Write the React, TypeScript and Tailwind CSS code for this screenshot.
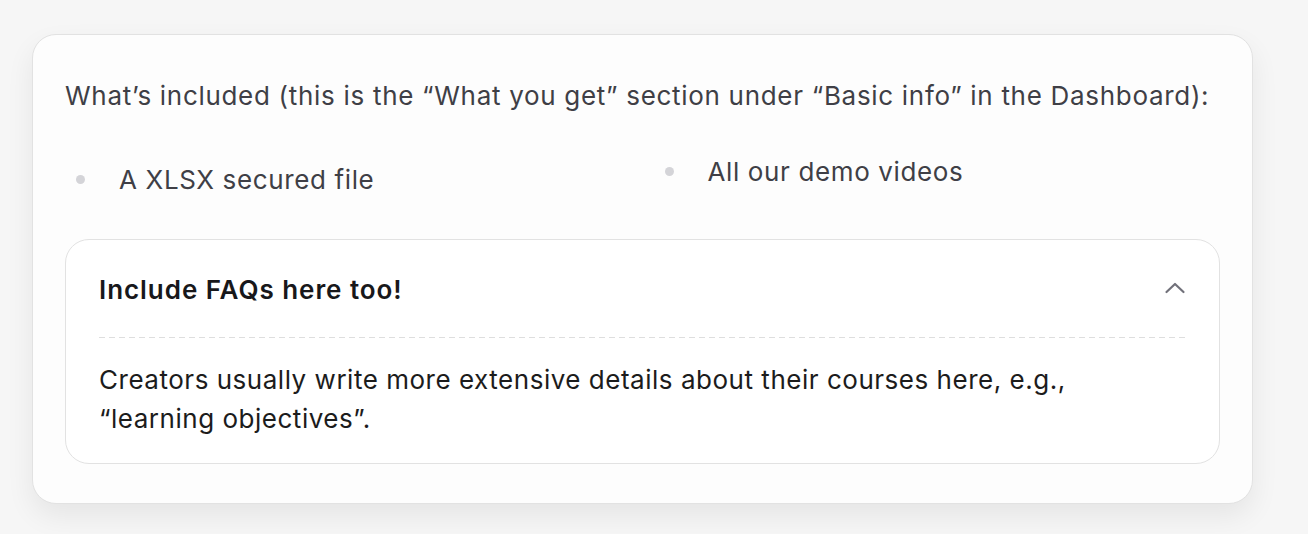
import React from "react";

export default function App() {
  return (
    <div className="min-h-[534px] w-full bg-[#f6f6f6] pl-[32px] pt-[34px]" style={{ fontFamily: "Inter, 'Noto Sans', sans-serif" }}>
      <div className="w-[1221px] rounded-[24px] border border-[#e2e2e2] bg-[#fdfdfd] px-[32px] pt-[41px] pb-[39px] shadow-[0_12px_28px_rgba(0,0,0,0.07)]">
        <p className="text-[26px] leading-[39px] text-[#3f3f46] tracking-[0.7px]">
          What’s included (this is the “What you get” section under “Basic info” in the Dashboard):
        </p>
        <div className="mt-[37px] grid grid-cols-2 gap-x-[22px] items-start">
          <div className="flex items-center pt-[8px]">
            <span className="ml-[11px] h-[9px] w-[9px] rounded-full bg-[#d4d4d8]" />
            <span className="ml-[34px] text-[26px] leading-[39px] text-[#3f3f46] tracking-[0.63px]">A XLSX secured file</span>
          </div>
          <div className="flex items-center">
            <span className="ml-[11px] h-[9px] w-[9px] rounded-full bg-[#d4d4d8]" />
            <span className="ml-[34px] text-[26px] leading-[39px] text-[#3f3f46] tracking-[0.63px]">All our demo videos</span>
          </div>
        </div>
        <div className="mt-[40px] rounded-[24px] border border-[#e2e2e2] bg-white pl-[33px] pr-[32px] pt-[30px] pb-[25px]">
          <div className="flex items-center justify-between">
            <span className="text-[26px] leading-[39px] font-semibold text-[#18181b] tracking-[0.95px]">Include FAQs here too!</span>
            <svg width="22" height="14" viewBox="0 0 22 14" className="mr-[1px] -mt-[4px]">
              <path d="M2.5 11 L11 3 L19.5 11" fill="none" stroke="#71717a" strokeWidth="2.2" strokeLinecap="round" strokeLinejoin="round" />
            </svg>
          </div>
          <div className="mt-[28px] h-px bg-[repeating-linear-gradient(to_right,#dedede_0px,#dedede_6px,transparent_6px,transparent_10px)]" />
          <p className="mt-[22px] text-[26px] leading-[39px] text-[#1c1c1c] tracking-[0.52px]">
            Creators usually write more extensive details about their courses here, e.g.,
            <br />
            “learning objectives”.
          </p>
        </div>
      </div>
    </div>
  );
}
